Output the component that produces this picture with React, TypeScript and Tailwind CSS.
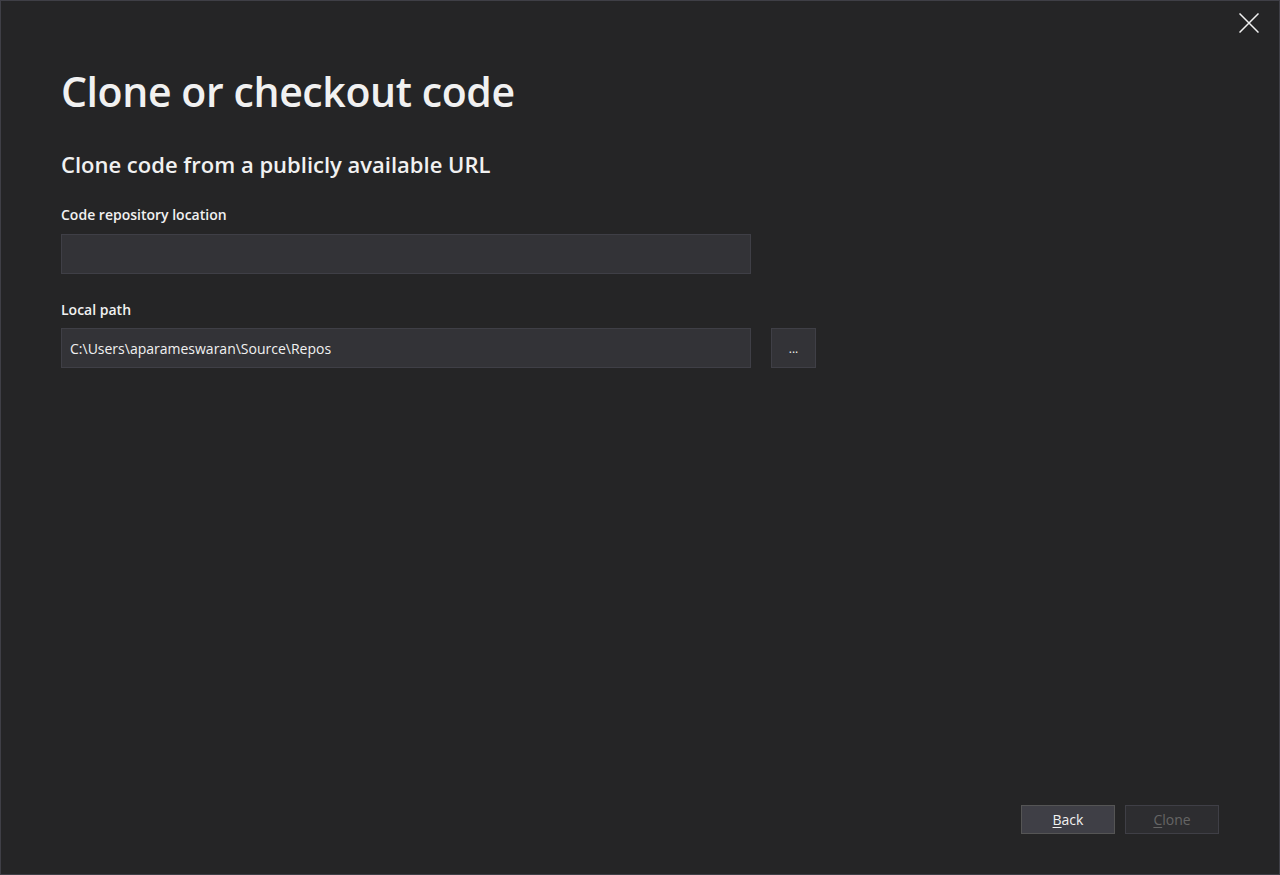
const font = { fontFamily: '"Open Sans", "Noto Sans", sans-serif' };

function CloseIcon() {
  return (
    <svg width="20" height="20" viewBox="0 0 20 20" fill="none" stroke="#f1f1f1" strokeWidth="1.5">
      <path d="M0.5 0.5L19.5 19.5M19.5 0.5L0.5 19.5" />
    </svg>
  );
}

export default function App() {
  return (
    <div
      className="w-[1280px] h-[875px] bg-[#252526] border border-[#3f3f46] text-[#f1f1f1] flex flex-col"
      style={font}
    >
      {/* Close button */}
      <div className="flex justify-end pt-[12px] pr-[20px]">
        <CloseIcon />
      </div>

      <div className="flex-1 flex flex-col pl-[60px]">
        <h1 className="mt-[34px] text-[41px] leading-[48px] font-semibold tracking-[-0.4px]">
          Clone or checkout code
        </h1>

        <h2 className="mt-[34px] text-[22px] leading-[30px] font-semibold">
          Clone code from a publicly available URL
        </h2>

        <label className="mt-[26px] text-[14px] leading-[20px] font-semibold">
          Code repository location
        </label>
        <div className="mt-[9px] w-[690px] h-[40px] bg-[#333337] border border-[#3f3f46]" />

        <label className="mt-[26px] text-[14px] leading-[20px] font-semibold">
          Local path
        </label>
        <div className="mt-[8px] flex items-center gap-[20px]">
          <div className="w-[690px] h-[40px] bg-[#333337] border border-[#3f3f46] flex items-center px-[8px] text-[14px]">
            C:\Users\aparameswaran\Source\Repos
          </div>
          <button className="w-[45px] h-[40px] bg-[#333337] border border-[#3f3f46] text-[12px] text-[#f1f1f1] flex items-center justify-center pt-[2px]">
            ...
          </button>
        </div>

        <div className="flex-1" />

        <div className="flex justify-end gap-[10px] pr-[60px] pb-[40px]">
          <button className="w-[94px] h-[29px] bg-[#3f3f46] border border-[#555555] text-[14px] text-[#f1f1f1]">
            <span className="underline underline-offset-2">B</span>ack
          </button>
          <button className="w-[94px] h-[29px] bg-[#2d2d30] border border-[#3f3f46] text-[14px] text-[#656565]">
            <span className="underline underline-offset-2">C</span>lone
          </button>
        </div>
      </div>
    </div>
  );
}
